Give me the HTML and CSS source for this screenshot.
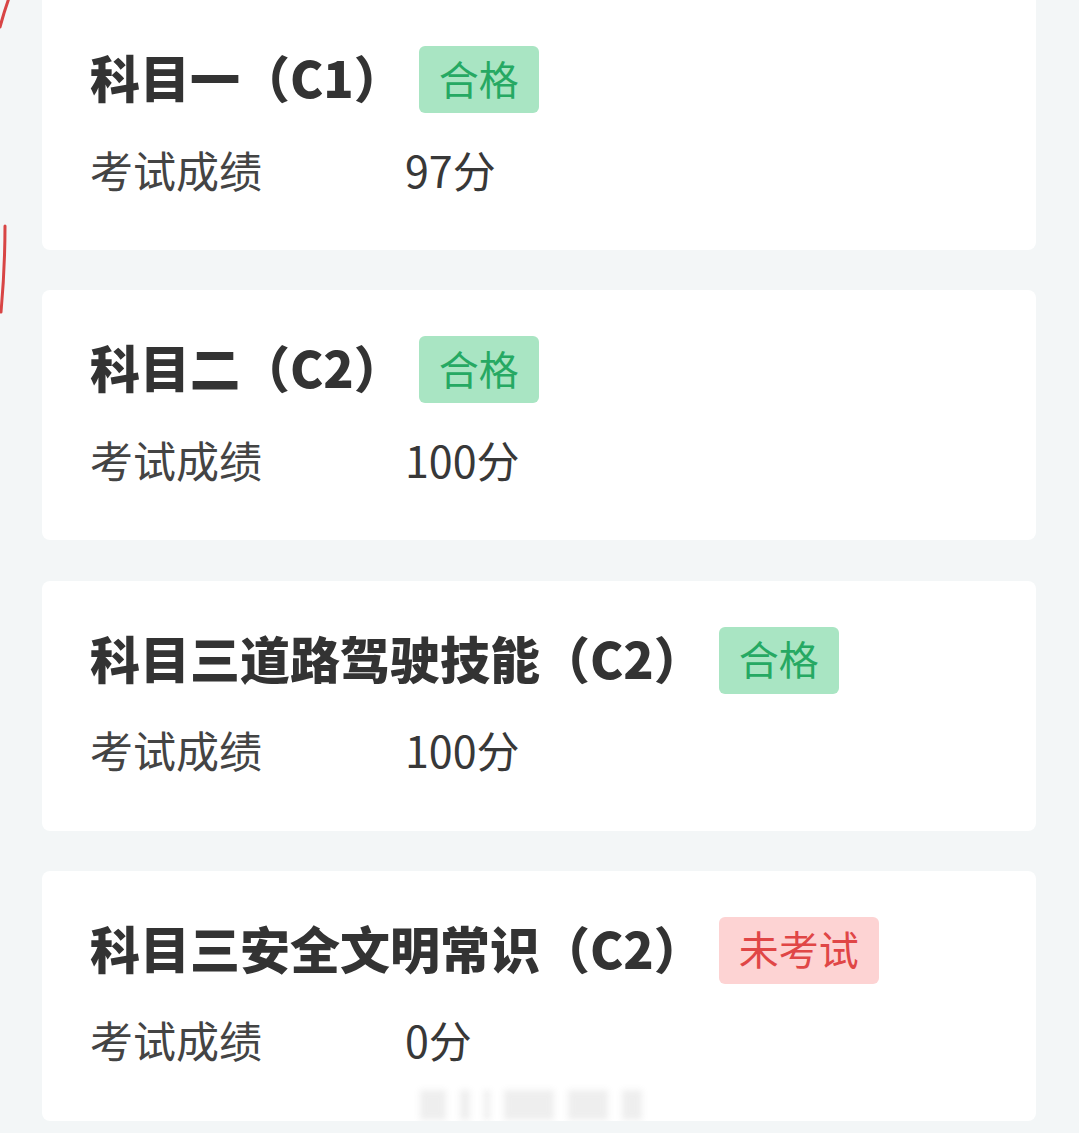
FILE: index.html
```html
<!DOCTYPE html>
<html lang="zh-CN">
<head>
<meta charset="utf-8">
<title>考试成绩</title>
<link rel="stylesheet" href="styles.css">
</head>
<body>
<div class="page">
  <div class="card">
    <div class="title-row">
      <span class="title">科目一（C1）</span>
      <span class="badge pass">合格</span>
    </div>
    <div class="score-row"><span class="label">考试成绩</span><span class="value">97分</span></div>
  </div>
  <div class="card">
    <div class="title-row">
      <span class="title">科目二（C2）</span>
      <span class="badge pass">合格</span>
    </div>
    <div class="score-row"><span class="label">考试成绩</span><span class="value">100分</span></div>
  </div>
  <div class="card">
    <div class="title-row">
      <span class="title">科目三道路驾驶技能（C2）</span>
      <span class="badge pass">合格</span>
    </div>
    <div class="score-row"><span class="label">考试成绩</span><span class="value">100分</span></div>
  </div>
  <div class="card last">
    <div class="title-row">
      <span class="title">科目三安全文明常识（C2）</span>
      <span class="badge fail">未考试</span>
    </div>
    <div class="score-row"><span class="label">考试成绩</span><span class="value">0分</span></div>
    <div class="watermark"><i></i><i></i><i></i><i></i><i></i><i></i></div>
  </div>
</div>
<svg class="annot" width="12" height="340" viewBox="0 0 12 340" aria-hidden="true">
  <path d="M0 27 Q4 12 9 -2" fill="none" stroke="#d84545" stroke-width="3" stroke-linecap="round"/>
  <path d="M5 226 Q5 268 1 312" fill="none" stroke="#d84545" stroke-width="3" stroke-linecap="round"/>
</svg>
</body>
</html>
```

FILE: styles.css
```css
html, body {
  margin: 0;
  padding: 0;
  background: #f3f6f7;
}
body {
  font-family: "Noto Sans CJK SC", "Noto Sans", sans-serif;
  color: #333;
}
.page {
  display: flex;
  flex-direction: column;
  gap: 40.3px;
  padding: 0 43px 0 42px;
}
.card {
  position: relative;
  background: #fff;
  border-radius: 8px;
  height: 250px;
  box-sizing: border-box;
  padding: 46px 48px 0 48px;
}
.card:first-child {
  border-radius: 0 0 8px 8px;
}
.title-row {
  display: flex;
  align-items: center;
  gap: 15px;
  height: 67px;
}
.title {
  font-size: 50px;
  font-weight: 900;
  line-height: 1;
  padding-bottom: 7px;
  color: #333;
  white-space: nowrap;
}
.badge {
  display: flex;
  align-items: center;
  height: 67px;
  padding: 0 20px;
  border-radius: 6px;
  font-size: 40px;
  line-height: 1;
  box-sizing: border-box;
  padding-bottom: 4px;
}
.badge.pass {
  background: #a9e5c3;
  color: #26a963;
}
.badge.fail {
  background: #fdd3d3;
  color: #e04646;
}
.score-row {
  display: flex;
  align-items: center;
  margin-top: 31px;
  height: 50px;
  font-size: 43px;
  line-height: 1;
  color: #444;
}
.label {
  width: 315px;
  flex: none;
}
.value {
  color: #383838;
}
.watermark {
  position: absolute;
  left: 378px;
  top: 219px;
  display: flex;
  gap: 14px;
  filter: blur(3px);
  opacity: 0.16;
}
.watermark i {
  display: block;
  width: 26px;
  height: 30px;
  background: #999;
}
.watermark i:nth-child(2) { width: 10px; }
.watermark i:nth-child(3) { width: 6px; }
.watermark i:nth-child(4) { width: 50px; }
.watermark i:nth-child(5) { width: 40px; }
.watermark i:nth-child(6) { width: 20px; }
.annot {
  position: absolute;
  left: 0;
  top: 0;
}
```
